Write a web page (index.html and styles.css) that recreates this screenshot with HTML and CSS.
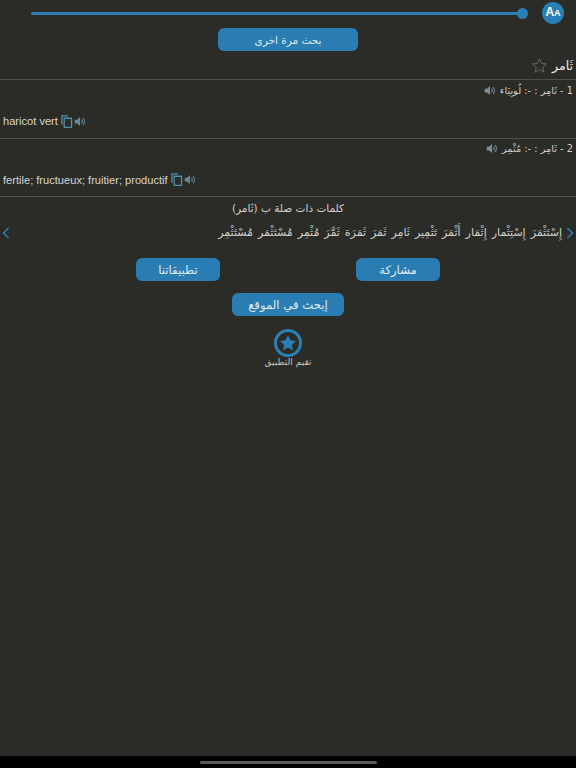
FILE: index.html
```html
<!DOCTYPE html>
<html lang="ar">
<head>
<meta charset="utf-8">
<title>ثامر</title>
<link rel="stylesheet" href="styles.css">
</head>
<body>
<div class="page">
  <main class="content">
    <div class="font-bar">
      <div class="slider"><span class="thumb"></span></div>
      <div class="aa"><span class="aa-big">A</span><span class="aa-small">A</span></div>
    </div>
    <div class="center"><button class="btn btn-again">بحث مرة اخرى</button></div>
    <div class="word-row" dir="rtl">
      <span class="word">ثَامر</span>
      <svg class="star" viewBox="0 0 24 24"><path d="M12 2.500l2.900 6.600 7.100.7-5.400 4.700 1.600 7-6.200-3.700-6.200 3.700 1.600-7L2 9.800l7.100-.7z"/></svg>
    </div>
    <section class="entry">
      <div class="ar-line" dir="rtl">
        <span>1 - ثَامِر : -: لُوبِيَاء</span>
        <svg class="spk spk-ar" viewBox="0 0 16 14"><use href="#speaker"/></svg>
      </div>
      <div class="fr-line">
        <span>haricot vert</span>
        <svg class="copy" viewBox="0 0 14 15"><use href="#copy"/></svg>
        <svg class="spk" viewBox="0 0 16 14"><use href="#speaker"/></svg>
      </div>
    </section>
    <section class="entry">
      <div class="ar-line" dir="rtl">
        <span>2 - ثَامِر : -: مُثْمِر</span>
        <svg class="spk spk-ar" viewBox="0 0 16 14"><use href="#speaker"/></svg>
      </div>
      <div class="fr-line">
        <span>fertile; fructueux; fruitier; productif</span>
        <svg class="copy" viewBox="0 0 14 15"><use href="#copy"/></svg>
        <svg class="spk" viewBox="0 0 16 14"><use href="#speaker"/></svg>
      </div>
    </section>
    <h2 class="related-title" dir="rtl">كلمات ذات صلة ب (ثَامر)</h2>
    <div class="related">
      <svg class="chev" viewBox="0 0 8 12"><path d="M6.500 1L1.500 6l5 5"/></svg>
      <div class="related-words" dir="rtl">إِسْتَثْمَرَ إِسْتِثْمار إِثْمَار أَثْمَرَ تَثْمِير ثَامِر ثَمَرَ ثَمَرَة ثَمَّرَ مُثْمِر مُسْتَثْمَر مُسْتَثْمِر</div>
      <svg class="chev" viewBox="0 0 8 12"><path d="M1.500 1l5 5-5 5"/></svg>
    </div>
    <div class="btn-pair">
      <button class="btn btn-small">تطبيقاتنا</button>
      <button class="btn btn-small">مشاركة</button>
    </div>
    <div class="center"><button class="btn btn-site">إبحث في الموقع</button></div>
    <div class="rate">
      <svg class="rate-icon" viewBox="0 0 28 28">
        <circle cx="14" cy="14" r="12.500"/>
        <path d="M14 6.300l2.400 5 5.400.7-3.900 3.800 1 5.400-4.900-2.600-4.900 2.600 1-5.400-3.900-3.800 5.400-.7z"/>
      </svg>
      <span class="rate-label">تقيم التطبيق</span>
    </div>
  </main>
  <footer class="home-bar"><span class="home-ind"></span></footer>
</div>
<svg class="defs" aria-hidden="true">
  <defs>
    <g id="speaker">
      <path d="M1 4.500h3L8 1v12L4 9.500H1z" fill="currentColor"/>
      <path d="M10 4.500a3.500 3.500 0 0 1 0 5M12 2.500a6.500 6.500 0 0 1 0 9" fill="none" stroke="currentColor" stroke-width="1.500"/>
    </g>
    <g id="copy" fill="none" stroke="currentColor" stroke-width="1.500">
      <path d="M1 11V1h7"/>
      <rect x="3.700" y="3.700" width="8.600" height="10.600" rx=".5"/>
    </g>
  </defs>
</svg>
</body>
</html>
```
FILE: styles.css
```css
* { box-sizing: border-box; }
html, body { margin: 0; height: 100%; }
body {
  background: #2b2b27;
  color: #d2d2ce;
  font-family: "Liberation Sans", "DejaVu Sans", sans-serif;
}
.page { height: 768px; display: flex; flex-direction: column; overflow: hidden; }
.content { flex: 1; display: flex; flex-direction: column; }
.defs { width: 0; height: 0; position: absolute; }

.font-bar { display: flex; align-items: center; height: 26px; padding: 0 12px 0 31px; }
.slider { flex: 1; height: 3px; background: #2a7fb5; border-radius: 2px; position: relative; margin-right: 19px; }
.thumb { position: absolute; right: -5px; top: -4px; width: 11px; height: 11px; border-radius: 50%; background: #2a7fb5; }
.aa { width: 22px; height: 22px; border-radius: 50%; background: #2a7fb5; color: #fff; font-weight: 700; display: flex; align-items: baseline; justify-content: center; padding-top: 5px; line-height: 11px; }
.aa-big { font-size: 12px; }
.aa-small { font-size: 9px; }

.center { display: flex; justify-content: center; }
.btn {
  border: 0; border-radius: 6px; background: #2a7db3; color: #dfeaf2;
  font-family: "DejaVu Sans", sans-serif; font-size: 11.700px; height: 23px; padding: 0;
}
.btn-again { width: 140px; margin-top: 2px; font-size: 10.500px; }

.word-row { display: flex; align-items: center; gap: 4px; height: 28px; padding: 0 3px; }
.word { font-family: "DejaVu Sans", sans-serif; font-size: 12.500px; color: #ececea; }
.star { width: 17px; height: 17px; fill: none; stroke: #6a6a66; stroke-width: 1.300; }

.entry { border-top: 1px solid #4f4f4b; height: 58.500px; display: flex; flex-direction: column; }
.ar-line { display: flex; align-items: center; gap: 4px; height: 20px; padding: 0 3px; font-family: "DejaVu Sans", sans-serif; font-size: 9.800px; }
.fr-line { display: flex; align-items: center; gap: 1px; margin-top: 12px; height: 18px; padding: 0 3px; font-size: 11.100px; color: #d6d6d2; }
.fr-line .copy { margin-left: 2px; }
.spk { width: 12px; height: 11px; color: #66889c; }
.spk-ar { color: #7b8e9a; }
.copy { width: 12px; height: 13px; color: #4f93ad; }

.related-title { margin: 0; border-top: 1px solid #4f4f4b; padding-top: 5px; height: 24px; text-align: center; font-family: "DejaVu Sans", sans-serif; font-weight: 400; font-size: 10.500px; }
.related { display: flex; align-items: center; height: 26px; padding: 0 2px; }
.related-words { flex: 1; font-family: "DejaVu Sans", sans-serif; font-size: 11px; word-spacing: 1.500px; white-space: nowrap; overflow: hidden; padding-right: 4px; line-height: 24px; }
.chev { width: 8px; height: 12px; fill: none; stroke: #2a7fb5; stroke-width: 1.500; flex: none; }

.btn-pair { display: flex; justify-content: center; gap: 136px; margin-top: 12px; }
.btn-small { width: 84px; }
.btn-site { width: 112px; margin-top: 12px; }

.rate { display: flex; flex-direction: column; align-items: center; margin-top: 13px; }
.rate-icon { width: 28px; height: 28px; }
.rate-icon circle { fill: none; stroke: #2a7fb5; stroke-width: 3; }
.rate-icon path { fill: #2a7fb5; }
.rate-label { font-family: "DejaVu Sans", sans-serif; font-size: 9px; color: #c4c4c0; }

.home-bar { height: 12px; background: #000; display: flex; justify-content: center; align-items: center; flex: none; }
.home-ind { width: 177px; height: 3px; border-radius: 2px; background: #5a5a5a; }
```
